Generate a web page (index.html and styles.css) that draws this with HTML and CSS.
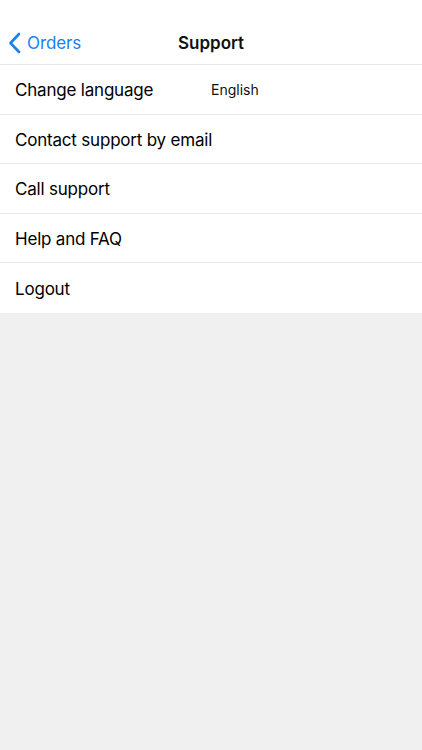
FILE: index.html
```html
<!DOCTYPE html>
<html>
<head>
<meta charset="utf-8">
<link rel="stylesheet" href="styles.css">
</head>
<body>
<div class="screen">
  <header class="nav">
    <div class="back">
      <svg class="chev" width="13" height="22" viewBox="0 0 13 22"><path d="M11 2 L2.5 11 L11 20" fill="none" stroke="#1a80f0" stroke-width="2.6" stroke-linecap="round" stroke-linejoin="round"/></svg>
      <span class="back-label">Orders</span>
    </div>
    <div class="title">Support</div>
  </header>
  <ul class="list">
    <li class="row"><span class="label">Change language</span><span class="value">English</span></li>
    <li class="row"><span class="label">Contact support by email</span></li>
    <li class="row"><span class="label">Call support</span></li>
    <li class="row"><span class="label">Help and FAQ</span></li>
    <li class="row last"><span class="label">Logout</span></li>
  </ul>
</div>
</body>
</html>
```
FILE: styles.css
```css
html, body {
  margin: 0;
  padding: 0;
}
body {
  background: #f0f0f0;
  font-family: Inter, "Noto Sans", "Liberation Sans", sans-serif;
  color: #000;
}
.screen {
  width: 422px;
  height: 750px;
  background: #f0f0f0;
}
.nav {
  height: 65px;
  box-sizing: border-box;
  background: #fff;
  border-bottom: 1px solid #e8e8e8;
  position: relative;
  display: flex;
  align-items: flex-end;
  padding-bottom: 10px;
}
.back {
  display: flex;
  align-items: center;
  padding-left: 8px;
  gap: 6px;
  height: 22px;
}
.chev {
  display: block;
}
.back-label {
  color: #1a80f0;
  font-size: 17px;
  letter-spacing: -0.1px;
}
.title {
  position: absolute;
  left: 0;
  right: 0;
  bottom: 10px;
  text-align: center;
  font-size: 17px;
  font-weight: 600;
  line-height: 22px;
  color: #111;
  pointer-events: none;
}
.list {
  list-style: none;
  margin: 0;
  padding: 0;
  background: #fff;
}
.row {
  height: 49.5px;
  box-sizing: border-box;
  border-bottom: 1px solid #e8e8e8;
  display: flex;
  align-items: center;
  padding-left: 15px;
  padding-top: 2px;
  font-size: 17px;
  letter-spacing: -0.2px;
  white-space: nowrap;
}
.row.last {
  border-bottom: none;
}
.label {
  flex: 0 0 196px;
}
.value {
  font-size: 14px;
  letter-spacing: 0;
  color: #111;
  padding-bottom: 2px;
}
```
